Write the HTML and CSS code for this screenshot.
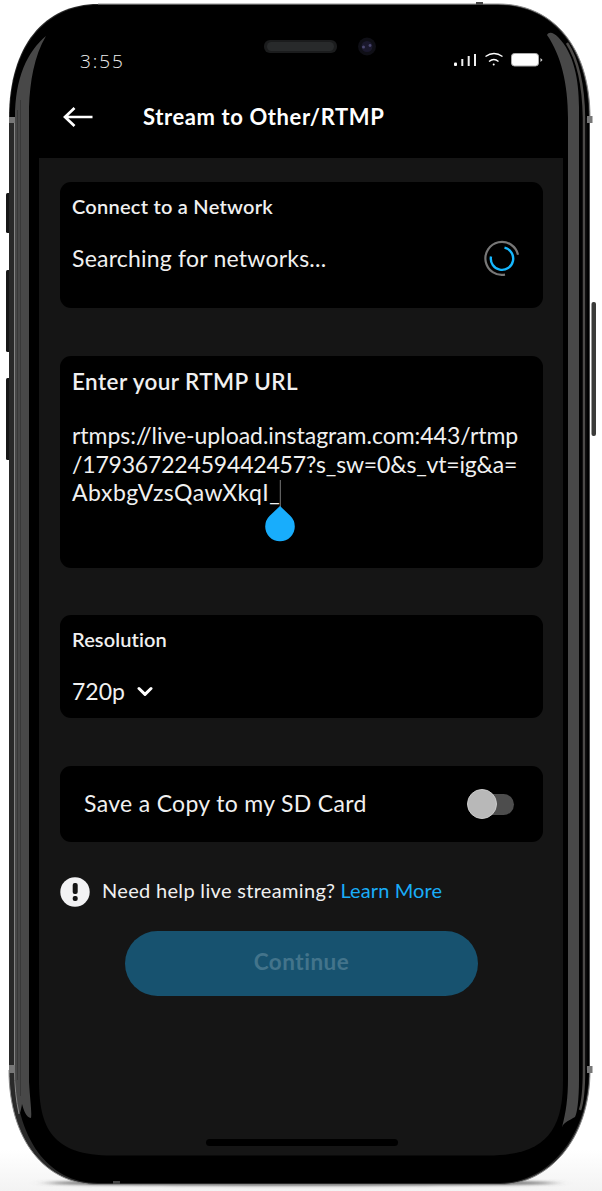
FILE: index.html
```html
<!DOCTYPE html>
<html lang="en">
<head>
<meta charset="utf-8">
<title>Stream to Other/RTMP</title>
<link rel="stylesheet" href="styles.css">
</head>
<body>
<div class="phone">
  <svg class="frame" viewBox="0 0 602 1191" aria-hidden="true">
    <defs>
      <filter id="soft" x="-20%" y="-200%" width="140%" height="500%"><feGaussianBlur stdDeviation="8 1.5"/></filter>
      <linearGradient id="floor" x1="0" y1="0" x2="0" y2="1"><stop offset="0" stop-color="#fff"/><stop offset="1" stop-color="#f3f3f3"/></linearGradient>
    </defs>
    <rect y="1150" width="602" height="41" fill="url(#floor)"/>
    <ellipse cx="301" cy="1183" rx="255" ry="2.5" fill="#555" filter="url(#soft)"/>
    <g fill="#171717">
      <rect x="6" y="193" width="6" height="40" rx="1.5"/>
      <rect x="6" y="270" width="6" height="82" rx="1.5"/>
      <rect x="6" y="378" width="6" height="82" rx="1.5"/>
    </g>
    <rect x="591.5" y="302" width="4.5" height="134" rx="2" fill="#3b3b39"/>
    <path d="M9 118C9 45 45 4 98 4H498C554 4 590 48 590 118V1070C590 1140 548 1184.500 500 1184.500H98C45 1184.500 9 1140 9 1070Z" fill="#292929"/>
    <path d="M98 4H498C554 4 590 48 590 118M9 1070C9 1140 45 1184.500 98 1184.500H500C548 1184.500 590 1140 590 1070" fill="none" stroke="#8c8c8c" stroke-width="1"/>
    <path d="M10 118C10 46 46 5 98 5H498C553 5 589 49 589 118V1068C589 1138 547 1183 500 1183H98C48 1183 15 1138 15 1068V118Z" fill="#000"/>
    <path d="M15 118C15 78 27 52 46 36C34 56 30 82 29 107V1082C30 1100 32 1112 31 1118C26 1117 24 1111 22 1104C21 1110 20 1114 19 1114C16 1100 15 1085 15 1068Z" fill="#484848"/>
    <path d="M14.500 118V1068C14.500 1085 16 1100 19 1114" fill="none" stroke="#858585"/>
    <path d="M17.500 110V1080M20.500 100V1096" fill="none" stroke="#383838"/>
    <path d="M547 35C549 31 554 33 558 37C574 53 579 80 579 107V1080C579 1100 577 1114 575 1117C570 1120 564 1122 562 1127C566 1112 568 1098 568 1078V118C568 84 561 55 547 35Z" fill="#484848"/>
    <path d="M567 43C578 60 583.500 85 584 118V1070C584 1088 583 1101 580 1110" fill="none" stroke="#4c4a48" stroke-width="2.500"/>
    <path d="M586.500 118V1070" stroke="#0a0a0a" stroke-width="1.500"/>
    <path d="M589.500 118V1070" stroke="#494949"/>
    <path d="M9 117H15V123H9ZM587 116H592.500V123H587ZM9 1065H15V1073H9ZM587 1066H592.500V1073H587Z" fill="#777"/>
    <path d="M476 2H483V5H476ZM113 1181H120V1184H113Z" fill="#454545"/>
    <path d="M39 158H563V1080C563 1128 548 1155.500 488 1155.500H112C52 1155.500 39 1128 39 1080Z" fill="#151515"/>
    <rect x="264" y="40" width="73" height="13" rx="6" fill="#1b1c1d"/>
    <rect x="267" y="42" width="67" height="9" rx="4.500" fill="#282a2b"/>
    <circle cx="367" cy="46.500" r="9" fill="#0f0f16"/>
    <circle cx="367" cy="46.500" r="5.500" fill="#1a182c"/>
    <circle cx="363.500" cy="47" r="1.500" fill="#4a476f"/><circle cx="370" cy="45.500" r="1.400" fill="#4a476f"/>
  </svg>

  <div class="screen">
    <header class="header">
      <div class="status">
        <span class="time">3:55</span>
        <svg class="signals" viewBox="453 50 90 20" aria-hidden="true">
          <rect x="454" y="62.500" width="3" height="3.500" rx="1" fill="#fff"/>
          <path d="M462.300 59V66M468.700 56V66M475 54V66" stroke="#f0f0f0" stroke-width="2"/>
          <path d="M485.500 56.500Q494 50.500 502.500 56.500M489 61.500Q494 57.500 498.500 61.500" fill="none" stroke="#fff" stroke-width="1.300"/>
          <circle cx="493.700" cy="64.500" r="1" fill="#fff"/>
          <rect x="511.500" y="53.500" width="27" height="12.500" rx="3" fill="#fff" stroke="#aaa"/>
          <path d="M540.500 58L542.500 60L540.500 62Z" fill="#ddd"/>
        </svg>
      </div>
      <div class="titlebar">
        <svg class="back" viewBox="62 106 32 22" aria-hidden="true"><path d="M74.500 108L65 117L74.500 126M65 117H92.500" fill="none" stroke="#fff" stroke-width="2.700"/></svg>
        <h1 class="title">Stream to Other/RTMP</h1>
      </div>
    </header>

    <main class="content">
      <section class="card network">
        <h2 class="label connect">Connect to a Network</h2>
        <div class="searching-row">
          <p class="value searching">Searching for networks...</p>
          <svg class="spinner" viewBox="483 240 37 37" aria-hidden="true">
            <path d="M518 254.800A16.500 16.500 0 1 0 505 274.600" fill="none" stroke="#777" stroke-width="2.200"/>
            <path d="M504.500 247.700A11.200 11.200 0 1 1 491 256.500" fill="none" stroke="#16b8ff" stroke-width="2.400"/>
          </svg>
        </div>
      </section>

      <section class="card url">
        <h2 class="label enter">Enter your RTMP URL</h2>
        <div class="value url-text">
          <div class="line-a">rtmps://live-upload.instagram.com:443/rtmp</div>
          <div class="line-b">/17936722459442457?s_sw=0&amp;s_vt=ig&amp;a=</div>
          <div class="line-c"><span>AbxbgVzsQawXkqI_</span><svg class="caret" viewBox="265 481 32 63" aria-hidden="true"><path d="M281.300 482V510" stroke="#777"/><path d="M281 508L291.500 518A14.800 14.800 0 1 1 270.500 518Z" fill="#18adfc"/></svg></div>
        </div>
      </section>

      <section class="card resolution">
        <h2 class="label res-label">Resolution</h2>
        <div class="res-row">
          <span class="value res-value">720p</span>
          <svg class="chevron" viewBox="137 685 16 13" aria-hidden="true"><path d="M139 688.500L145 694.300L151 688.500" fill="none" stroke="#fff" stroke-width="3" stroke-linecap="round" stroke-linejoin="round"/></svg>
        </div>
      </section>

      <section class="card save">
        <span class="value save-label">Save a Copy to my SD Card</span>
        <span class="toggle"><span class="knob"></span></span>
      </section>

      <div class="help">
        <svg class="info" viewBox="60 877 30 30" aria-hidden="true"><circle cx="75" cy="892" r="14.700" fill="#f2f2f4"/><rect x="72.700" y="883" width="5" height="11" rx="2" fill="#151515"/><rect x="72.700" y="896" width="5" height="5" rx="2" fill="#151515"/></svg>
        <span class="help-text">Need help live streaming?</span>
        <a class="more">Learn More</a>
      </div>

      <button class="continue"><span>Continue</span></button>
    </main>
    <div class="home"></div>
  </div>
</div>
</body>
</html>
```

FILE: styles.css
```css
* { box-sizing: border-box; }
body { margin: 0; background: #fff; font-family: Lato, "Open Sans", sans-serif; font-variant-ligatures: none; }
h1, h2, p { margin: 0; }
svg { display: block; flex: none; }
.phone { position: relative; width: 602px; height: 1191px; overflow: hidden; }
.frame { position: absolute; left: 0; top: 0; width: 602px; height: 1191px; }
.screen { position: relative; display: flex; flex-direction: column; width: 524px; height: 1191px; margin-left: 39px; white-space: nowrap; color: #f0f0f0; }

.header { height: 158px; padding-top: 50px; }
.status { display: flex; justify-content: space-between; height: 20px; padding: 0 20px 0 41px; }
.time { font: 300 19px/22px "Open Sans", sans-serif; letter-spacing: 1.9px; }
.signals { width: 90px; height: 20px; }
.titlebar { display: flex; height: 30px; margin-top: 32px; padding-left: 23px; gap: 49px; align-items: center; }
.back { width: 32px; height: 22px; margin-bottom: 1px; }
.title { font-size: 22px; line-height: 30px; font-weight: 700; color: #fff; letter-spacing: .6px; }

.content { padding: 24px 20px 0 21px; }
.card { width: 483px; background: #000; border-radius: 11px; padding: 0 12px; }
.network { height: 126px; padding-top: 10px; }
.label { font-weight: 600; line-height: 28px; }
.connect, .res-label { font-size: 20px; letter-spacing: .25px; }
.res-label { letter-spacing: .1px; }
.enter { font-size: 22.5px; letter-spacing: .42px; }
.value { font-size: 23px; line-height: 28.5px; font-weight: 400; }
.searching { letter-spacing: .22px; }
.searching-row { display: flex; justify-content: space-between; align-items: center; margin-top: 20px; height: 37px; padding-right: 11px; }
.spinner { width: 37px; height: 37px; }

.url { height: 212px; margin-top: 48px; padding-top: 12px; }
.url-text { margin-top: 25px; }
.line-a { letter-spacing: -.03px; }
.line-b { letter-spacing: -.18px; }
.line-c { display: flex; height: 28.5px; letter-spacing: .5px; }
.caret { width: 32px; height: 63px; margin: 1px 0 0 -16px; }

.resolution { height: 103px; margin-top: 47px; padding-top: 10px; }
.res-row { display: flex; align-items: center; height: 30px; margin-top: 23px; gap: 12px; }
.chevron { width: 16px; height: 13px; }

.save { display: flex; align-items: center; justify-content: space-between; height: 76px; margin-top: 48px; padding: 0 29px 0 24px; }
.save-label { letter-spacing: .32px; margin-bottom: 1px; }
.toggle { display: flex; align-items: center; width: 45px; height: 21px; border-radius: 11px; background: #4d4d4d; }
.knob { flex: none; width: 30px; height: 30px; margin-left: -2px; border-radius: 50%; background: #b8b8b8; border: 1px solid #cacaca; }

.help { display: flex; align-items: center; height: 30px; margin-top: 35px; font-size: 20px; line-height: 28px; }
.info { width: 30px; height: 30px; margin-right: 12px; }
.help-text { letter-spacing: .32px; margin-bottom: 4px; }
.more { margin: 0 0 4px 5px; letter-spacing: .12px; color: #19adf8; }
.continue { display: block; width: 353px; height: 65px; margin: 24px 0 0 65px; padding: 0 0 3px; border: 0; border-radius: 33px; background: #17526f; color: #43748b; font: 700 22.5px/30px Lato, sans-serif; font-variant-ligatures: none; letter-spacing: .5px; }
.home { width: 192px; height: 7px; margin: 143px 0 0 167px; border-radius: 4px; background: #000; }
```
